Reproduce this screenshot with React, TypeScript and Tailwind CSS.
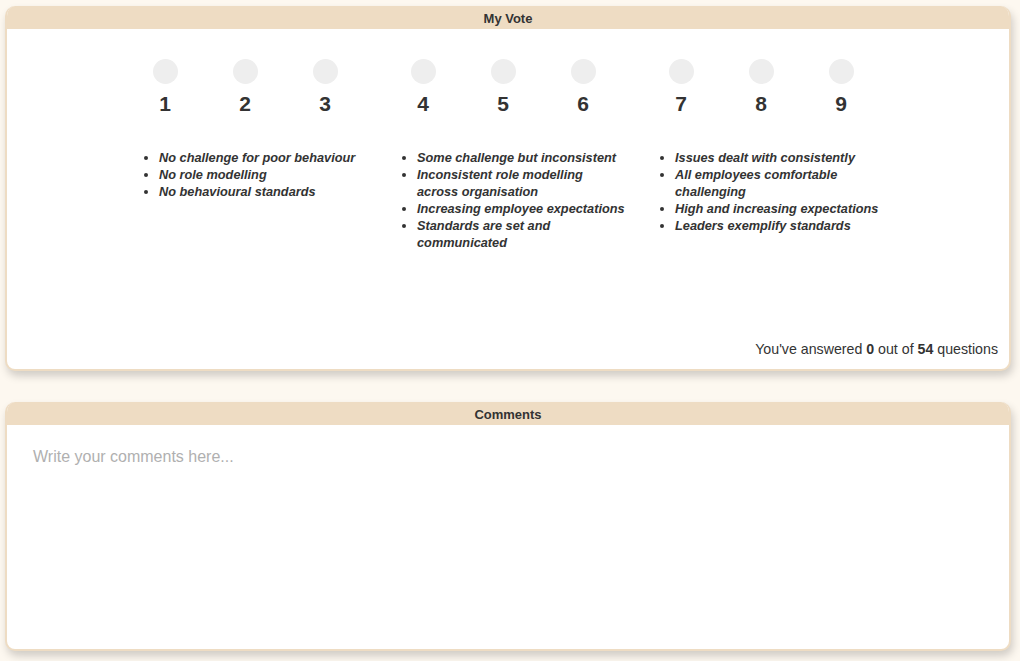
import React from "react";

const groups = [
  {
    nums: [1, 2, 3],
    items: [
      "No challenge for poor behaviour",
      "No role modelling",
      "No behavioural standards",
    ],
  },
  {
    nums: [4, 5, 6],
    items: [
      "Some challenge but inconsistent",
      "Inconsistent role modelling across organisation",
      "Increasing employee expectations",
      "Standards are set and communicated",
    ],
  },
  {
    nums: [7, 8, 9],
    items: [
      "Issues dealt with consistently",
      "All employees comfortable challenging",
      "High and increasing expectations",
      "Leaders exemplify standards",
    ],
  },
];

function Panel({ title, className, children }: { title: string; className: string; children: React.ReactNode }) {
  return (
    <div
      className={`flex flex-col rounded-[10px] border-2 border-t-0 border-[#eedcc3] bg-white shadow-[2px_5px_8px_rgba(0,0,0,0.18)] overflow-hidden ${className}`}
    >
      <div className="h-[23px] shrink-0 bg-[#eedcc3] text-center text-[13px] font-bold leading-[26px] text-[#333]">
        {title}
      </div>
      {children}
    </div>
  );
}

export default function App() {
  return (
    <div
      className="min-h-[661px] bg-[#fdf8f0] pt-[6px] pl-[5px]"
      style={{ fontFamily: '"Liberation Sans", Arial, sans-serif' }}
    >
      <Panel title="My Vote" className="w-[1006px] h-[365px]">
        <div className="flex flex-1 flex-col">
          <div className="flex flex-1 justify-center gap-[18px] pt-[30px] pr-[10px]">
            {groups.map((g, gi) => (
              <div key={gi} className="w-[240px]">
                <div className="flex">
                  {g.nums.map((n) => (
                    <div key={n} className="flex w-[80px] flex-col items-center">
                      <button className="h-[25px] w-[25px] rounded-full bg-[#eeeeee]" />
                      <div className="mt-[8px] text-[21px] font-bold leading-[24px] text-[#333]">{n}</div>
                    </div>
                  ))}
                </div>
                <ul className="mt-[33px] w-[243px] list-disc pl-[34px] text-[12.75px] font-bold italic leading-[17px] text-[#333]">
                  {g.items.map((t) => (
                    <li key={t}>{t}</li>
                  ))}
                </ul>
              </div>
            ))}
          </div>
          <div className="pr-[11px] pb-[12px] text-right text-[14.2px] leading-[16px] text-[#333]">
            You've answered <b>0</b> out of <b>54</b> questions
          </div>
        </div>
      </Panel>
      <Panel title="Comments" className="mt-[31px] w-[1006px] h-[249px]">
        <textarea
          placeholder="Write your comments here..."
          className="flex-1 resize-none px-[26px] pt-[23px] pb-[19px] text-[16px] leading-[18px] text-[#333] outline-none placeholder:text-[#b0b0b0]"
        />
      </Panel>
    </div>
  );
}
